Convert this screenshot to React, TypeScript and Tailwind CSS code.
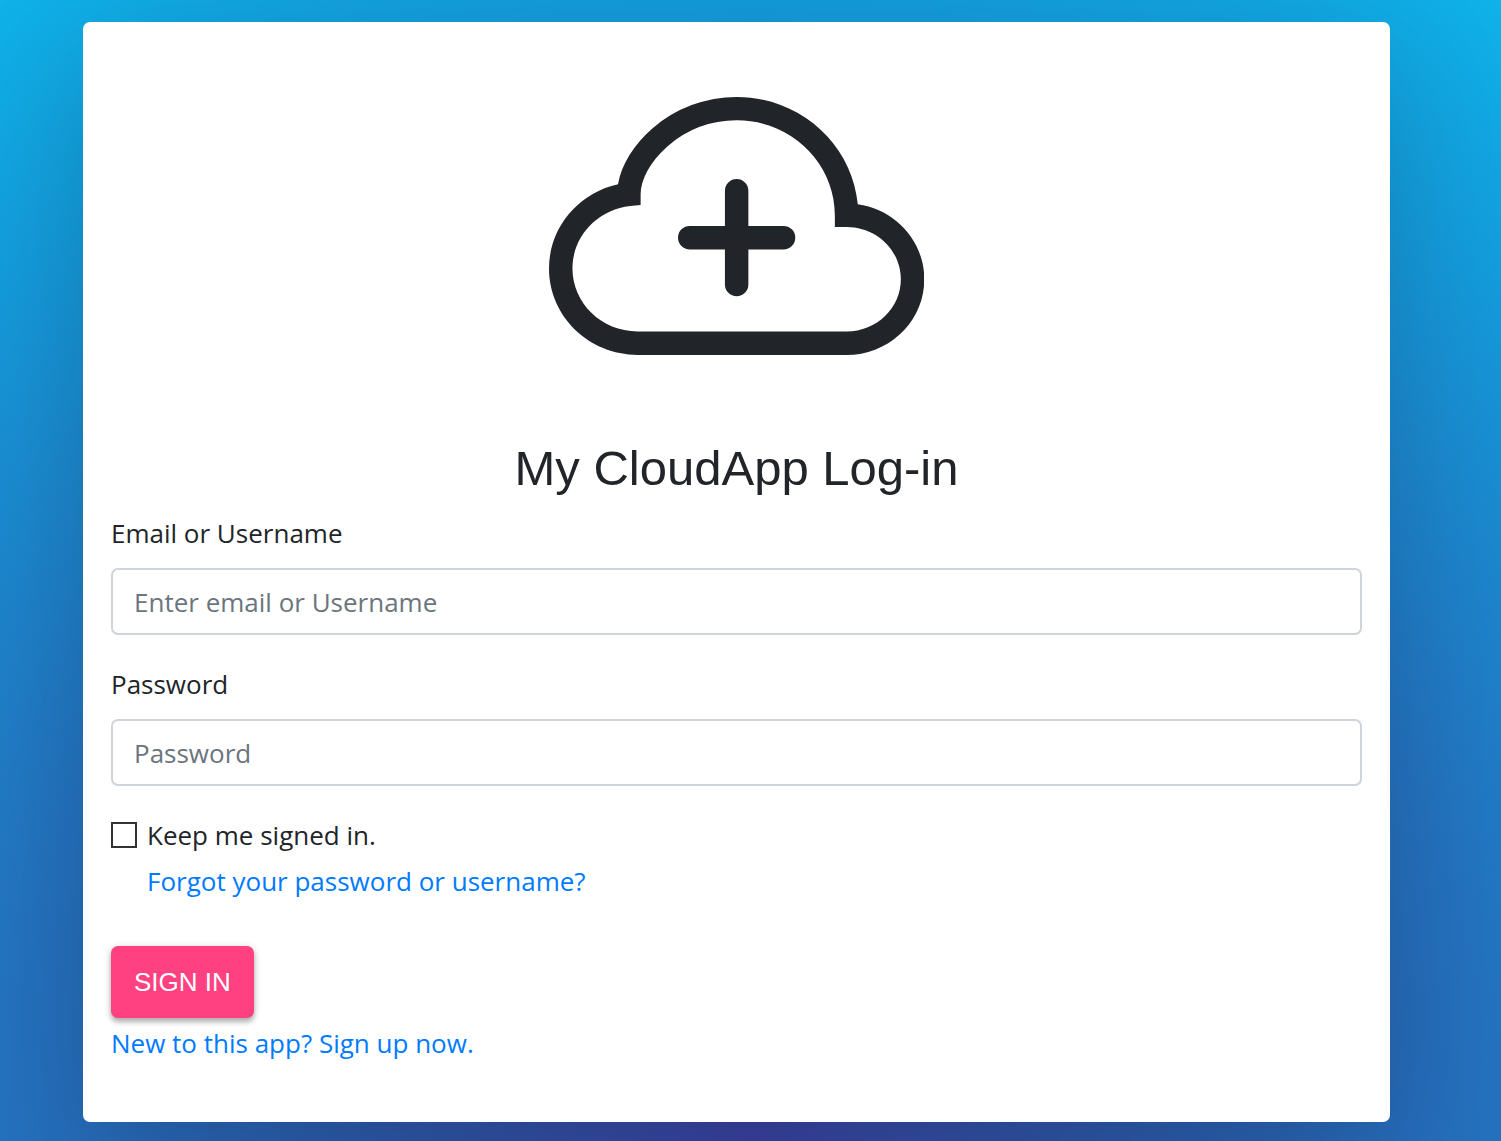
import React from "react";

function CloudPlusIcon() {
  return (
    <svg
      viewBox="0 0 16 16"
      fill="currentColor"
      aria-hidden="true"
      className="mx-auto block aspect-square w-[30%]"
    >
      <path
        fillRule="evenodd"
        d="M4.406 3.342A5.53 5.53 0 0 1 8 2c2.69 0 4.923 2 5.166 4.579C14.758 6.804 16 8.137 16 9.773 16 11.569 14.502 13 12.687 13H3.781C1.708 13 0 11.366 0 9.318c0-1.763 1.266-3.223 2.942-3.593.143-.863.698-1.723 1.464-2.383zm.653.757c-.757.653-1.153 1.44-1.153 2.056v.448l-.445.049C2.064 6.805 1 7.952 1 9.318 1 10.785 2.23 12 3.781 12h8.906C13.98 12 15 10.988 15 9.773c0-1.216-1.02-2.228-2.313-2.228h-.5v-.5C12.188 4.825 10.328 3 8 3a4.53 4.53 0 0 0-2.941 1.1z"
      />
      <path
        fillRule="evenodd"
        d="M8 5.5a.5.5 0 0 1 .5.5v1.5H10a.5.5 0 0 1 0 1H8.5V10a.5.5 0 0 1-1 0V8.5H6a.5.5 0 0 1 0-1h1.5V6a.5.5 0 0 1 .5-.5z"
      />
    </svg>
  );
}

type FieldProps = {
  id: string;
  label: string;
  type: string;
  placeholder: string;
};

function Field({ id, label, type, placeholder }: FieldProps) {
  return (
    <div className="mb-7">
      <label htmlFor={id} className="mb-3.5 block">
        {label}
      </label>
      <input
        id={id}
        type={type}
        placeholder={placeholder}
        className="block h-[67px] w-full rounded-[7px] border-2 border-[#ced4da] bg-white px-[21px] placeholder:text-[#6c757d] placeholder:opacity-100"
      />
    </div>
  );
}

export default function App() {
  return (
    <div className="min-h-screen bg-[radial-gradient(circle_at_bottom,#38419f_0%,#2c57a8_26%,#2472bf_55%,#149bdb_83%,#0fb2e9_100%)] pt-[22px] pr-[111px] pb-[19px] pl-[83px] font-['Open_Sans','Noto_Sans',sans-serif] text-[26px] leading-[42px] text-[#212529]">
      <main className="rounded-[7px] bg-white p-7 shadow-[0_35px_131px_rgba(0,0,0,0.16)]">
        <CloudPlusIcon />
        <h1 className="mb-3.5 pt-3.5 text-center font-['Liberation_Sans',Arial,sans-serif] text-[49px] leading-[59px]">
          My CloudApp Log-in
        </h1>
        <form onSubmit={(event) => event.preventDefault()}>
          <Field
            id="username"
            label="Email or Username"
            type="text"
            placeholder="Enter email or Username"
          />
          <Field id="password" label="Password" type="password" placeholder="Password" />
          <div className="mb-11">
            <div className="flex items-center gap-2.5">
              <input
                id="remember"
                type="checkbox"
                className="size-[26px] appearance-none border-2 border-[#333333] bg-white checked:bg-[#007bff]"
              />
              <label htmlFor="remember">Keep me signed in.</label>
            </div>
            <a href="#forgot" className="mt-1 ml-9 block w-fit text-[#007bff]">
              Forgot your password or username?
            </a>
          </div>
          <button
            type="submit"
            className="block h-[72px] rounded-[7px] bg-[#ff4081] px-[23px] font-['Liberation_Sans',Arial,sans-serif] text-white shadow-[0_4px_5px_rgba(0,0,0,0.25),0_1px_9px_rgba(0,0,0,0.15)]"
          >
            SIGN IN
          </button>
        </form>
        <a href="#signup" className="mt-1 mb-[30px] block w-fit text-[#007bff]">
          New to this app? Sign up now.
        </a>
      </main>
    </div>
  );
}
